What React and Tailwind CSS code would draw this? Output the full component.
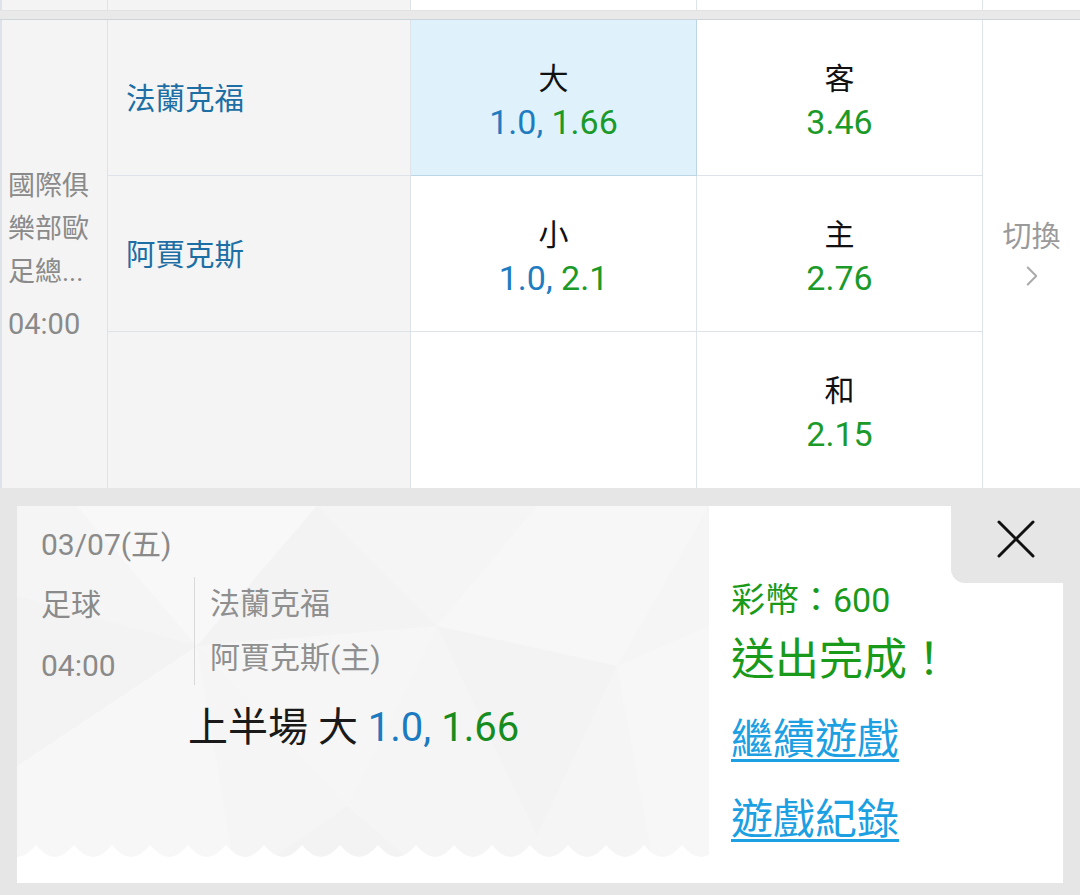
import React from 'react';
import { ChevronRight } from 'lucide-react';

const font = 'font-[family-name:Roboto,Noto_Sans_CJK_TC,sans-serif]';

const OddsCell = ({ label, line, odds, active, bottom = true }) => (
    <div className={`flex flex-col items-center justify-center border-r pt-[6px] ${bottom ? 'border-b' : ''} ${active ? 'bg-[#dff2fc] border-[#bcd6e6]' : 'bg-white border-[#dde3e8]'}`}>
        {label && <span className="text-[30px] leading-[42px] text-[#111]">{label}</span>}
        {odds && (
            <span className="text-[34px] leading-[44px]">
                {line && <span className="text-[#1f7cc0]">{line}, </span>}
                <span className="text-[#1b9a2a]">{odds}</span>
            </span>
        )}
    </div>
);

const TeamCell = ({ name, bottom = true }) => (
    <div className={`flex items-center bg-[#f4f4f4] border-r border-[#dde3e8] pl-[18px] pt-[4px] ${bottom ? 'border-b' : ''}`}>
        <span className="text-[29.5px] text-[#1c6ea4]">{name}</span>
    </div>
);

const Zigzag = () => {
    let d = 'M0 14';
    for (let i = 0; i < 20; i++) {
        const x = i * 38;
        d += ` Q${x + 9} 14 ${x + 19} 2 Q${x + 29} 14 ${x + 38} 14`;
    }
    d += ' L760 60 L0 60 Z';
    return (
        <svg className="absolute left-0 bottom-0 w-full h-[40px]" viewBox="0 0 692 40" preserveAspectRatio="none">
            <path d={d} fill="#ffffff" />
        </svg>
    );
};

const PolyBg = () => (
    <svg className="absolute inset-0 w-full h-full" viewBox="0 0 692 377" preserveAspectRatio="none">
        <rect width="692" height="377" fill="#f5f5f5" />
        <polygon points="60,0 300,0 180,140" fill="#f8f8f8" />
        <polygon points="180,140 300,0 420,120" fill="#f3f3f3" />
        <polygon points="420,120 520,0 692,0 600,160" fill="#f7f7f7" />
        <polygon points="0,90 180,140 0,260" fill="#f3f3f3" />
        <polygon points="180,140 420,120 330,300" fill="#f6f6f6" />
        <polygon points="420,120 600,160 520,330" fill="#f3f3f3" />
        <polygon points="600,160 692,120 692,377 640,377" fill="#f7f7f7" />
        <polygon points="0,260 180,140 220,377 0,377" fill="#f7f7f7" />
        <polygon points="220,377 330,300 420,377" fill="#f3f3f3" />
    </svg>
);

const App = () => {
    return (
        <div className={`w-[1080px] h-[895px] overflow-hidden bg-white ${font}`}>
            {/* top strip from previous row */}
            <div className="grid grid-cols-[108px_303px_286px_286px_1fr] h-[10px]">
                <div className="bg-[#f4f4f4] border-l-2 border-r border-[#dde3e8]"></div>
                <div className="bg-[#f4f4f4] border-r border-[#dde3e8]"></div>
                <div className="bg-white border-r border-[#dde3e8]"></div>
                <div className="bg-white border-r border-[#dde3e8]"></div>
                <div className="bg-white"></div>
            </div>
            <div className="h-[10px] bg-[#e9e9e9] border-t border-b border-t-[#e2e2e2] border-b-[#ccd5dc]"></div>

            {/* match table */}
            <div className="grid grid-cols-[108px_303px_286px_286px_1fr] grid-rows-[156px_156px_156px]">
                <div className="row-span-3 flex flex-col justify-center bg-[#f4f4f4] border-l-2 border-r border-[#dde3e8] pl-[6px] pt-[10px] text-[27px] leading-[43px] text-[#8a8a8a]">
                    <span>國際俱</span>
                    <span>樂部歐</span>
                    <span>足總...</span>
                    <span className="text-[29px] leading-[60px]">04:00</span>
                </div>
                <TeamCell name="法蘭克福" />
                <OddsCell label="大" line="1.0" odds="1.66" active />
                <OddsCell label="客" odds="3.46" />
                <div className="row-span-3 flex flex-col items-center justify-center pt-[2px] bg-white">
                    <span className="text-[29px] leading-[40px] text-[#9a9a9a]">切換</span>
                    <ChevronRight className="w-[34px] h-[34px] text-[#aaaaaa] mt-[2px]" strokeWidth={1.4} />
                </div>
                <TeamCell name="阿賈克斯" />
                <OddsCell label="小" line="1.0" odds="2.1" />
                <OddsCell label="主" odds="2.76" />
                <TeamCell name="" bottom={false} />
                <OddsCell bottom={false} />
                <OddsCell label="和" odds="2.15" bottom={false} />
            </div>

            {/* confirmation panel */}
            <div className="h-[407px] bg-[#e6e6e6] pt-[18px] pl-[17px] pr-[17px]">
                <div className="relative flex h-[377px] w-[1046px] bg-white">
                    <div className="relative w-[692px] h-full overflow-hidden">
                        <PolyBg />
                        <Zigzag />
                        <div className="relative pl-[24px] pt-[19px]">
                            <div className="text-[30px] leading-[40px] text-[#8a8a8a]">03/07(五)</div>
                            <div className="flex mt-[9px]">
                                <div className="w-[153px] text-[30px] leading-[61px] text-[#8a8a8a]">
                                    <div>足球</div>
                                    <div>04:00</div>
                                </div>
                                <div className="mt-[3px] h-[108px] border-l border-[#d9d9d9] pl-[15px] text-[30px] leading-[54px] text-[#8f8f8f]">
                                    <div>法蘭克福</div>
                                    <div>阿賈克斯(主)</div>
                                </div>
                            </div>
                            <div className="mt-[8px] pl-[147px] text-[40px] leading-[48px] text-[#1a1a1a]">
                                上半場 大 <span className="text-[#1b7ac0]">1.0, </span>
                                <span className="text-[#168c1e]">1.66</span>
                            </div>
                        </div>
                    </div>
                    <div className="flex-1 pl-[22px] pt-[74px]">
                        <div className="text-[34px] leading-[40px] text-[#1a9a1a]">彩幣：600</div>
                        <div className="mt-[12px] text-[44px] leading-[56px] text-[#1a9a1a]">送出完成！</div>
                        <a href="#" className="block mt-[24px] w-max text-[42px] leading-[56px] text-[#1ca0e2] underline underline-offset-[5px] decoration-[3px]">繼續遊戲</a>
                        <a href="#" className="block mt-[24px] w-max text-[42px] leading-[56px] text-[#1ca0e2] underline underline-offset-[5px] decoration-[3px]">遊戲紀錄</a>
                    </div>
                    {/* close notch */}
                    <button className="absolute top-0 right-0 w-[112px] h-[77px] bg-[#e6e6e6] rounded-bl-[14px] flex items-start justify-center pt-[14px] pl-[18px]">
                        <svg width="38" height="38" viewBox="0 0 38 38">
                            <path d="M2 2 L36 36 M36 2 L2 36" stroke="#111" strokeWidth="3" strokeLinecap="round" />
                        </svg>
                    </button>
                </div>
            </div>
        </div>
    );
};

export default App;
